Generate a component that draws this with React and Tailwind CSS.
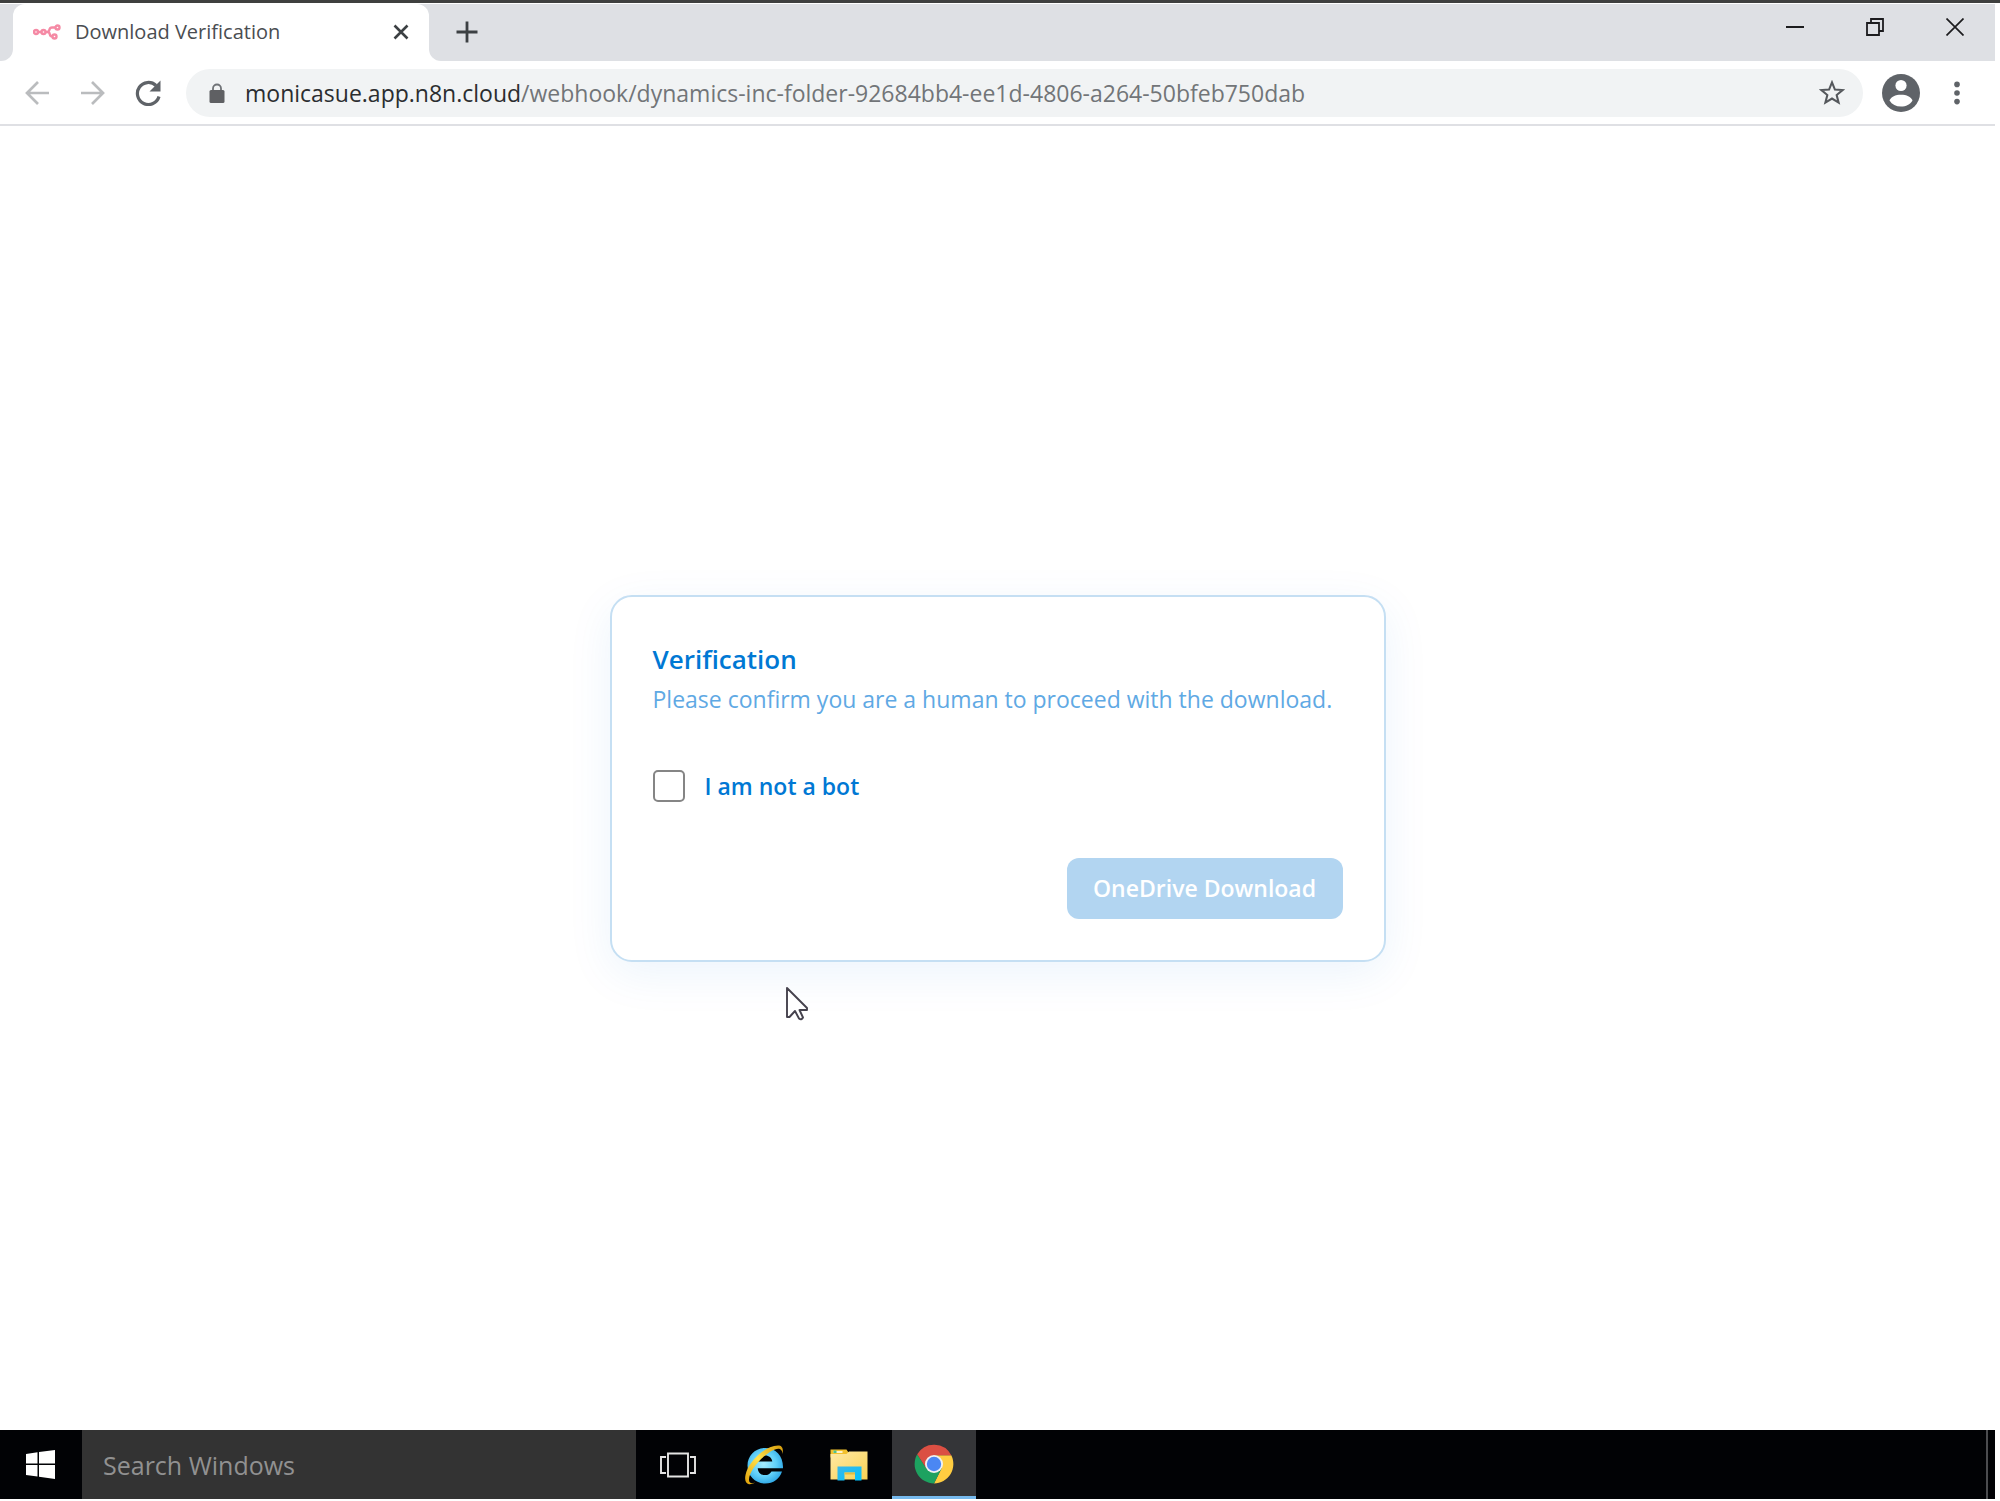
import React from "react";

function Favicon() {
  return (
    <svg viewBox="0 0 28 16" className="h-4 w-7 shrink-0" fill="none" stroke="#f58aa5" strokeWidth="2.400">
      <circle cx="3" cy="8" r="2" />
      <circle cx="10.500" cy="8" r="2" />
      <circle cx="24.500" cy="3.500" r="2" />
      <circle cx="21.500" cy="12.500" r="2" />
      <path d="M5 8h3.500M12.500 8H14c1.600 0 2-.8 2.400-2.300C16.800 4.200 17.600 3.500 19 3.500h3.500M14.500 8c1.600 0 2 .9 2.300 2.200.3 1.500 1 2.300 2.700 2.300" />
    </svg>
  );
}

function TabStrip() {
  return (
    <div className="flex h-[57px] bg-white">
      <div className="w-[13px] rounded-br-xl bg-[#dee0e4]" />
      <div className="w-[416px] bg-gradient-to-b from-[#dee0e4] from-50% to-white to-50%">
        <div className="flex h-full items-center rounded-t-xl bg-white pr-[20px] pb-[2px] pl-[20px]">
          <Favicon />
          <span className="ml-[14px] flex-1 text-[20px] leading-6 whitespace-nowrap text-[#4a4d51]">Download Verification</span>
          <button type="button" aria-label="Close tab">
            <svg viewBox="0 0 16 16" className="size-4" stroke="#3c4043" strokeWidth="2.600">
              <path d="M1.500 1.500l13 13M14.500 1.500l-13 13" />
            </svg>
          </button>
        </div>
      </div>
      <div className="flex flex-1 rounded-bl-xl bg-[#dee0e4]">
        <button type="button" aria-label="New tab" className="flex h-14 w-[76px] items-center justify-center">
          <svg viewBox="0 0 22 22" className="size-[22px]" stroke="#3c4043" strokeWidth="2.800">
            <path d="M11 .5v21M.5 11h21" />
          </svg>
        </button>
        <div className="ml-auto flex h-[46px]">
          <button type="button" aria-label="Minimize" className="flex w-20 items-center justify-center">
            <svg viewBox="0 0 18 18" className="size-[18px]" stroke="#1c1c1e" strokeWidth="2">
              <path d="M0 9h18" />
            </svg>
          </button>
          <button type="button" aria-label="Restore" className="flex w-20 items-center justify-center">
            <svg viewBox="0 0 18 18" className="size-[18px]" fill="none" stroke="#1c1c1e" strokeWidth="1.800">
              <path d="M1 5h12v12H1zM5 5V1h12v12h-4" />
            </svg>
          </button>
          <button type="button" aria-label="Close window" className="flex w-20 items-center justify-center">
            <svg viewBox="0 0 18 18" className="size-[18px]" stroke="#1c1c1e" strokeWidth="1.700">
              <path d="M.5 .5l17 17M17.500 .5l-17 17" />
            </svg>
          </button>
        </div>
      </div>
    </div>
  );
}

function Toolbar() {
  return (
    <div className="flex h-[65px] items-center border-b-2 border-[#dfe0e4] bg-white pr-[28px] pl-[22px]">
      <button type="button" aria-label="Back" className="flex w-[30px] justify-center">
        <svg viewBox="0 0 26 26" className="size-[26px]" fill="none" stroke="#babcbe" strokeWidth="2.700">
          <path d="M25 13H3M14 2L3 13l11 11" />
        </svg>
      </button>
      <button type="button" aria-label="Forward" className="ml-[26px] flex w-[30px] justify-center">
        <svg viewBox="0 0 26 26" className="size-[26px]" fill="none" stroke="#babcbe" strokeWidth="2.700">
          <path d="M1 13h22M12 2l11 11-11 11" />
        </svg>
      </button>
      <button type="button" aria-label="Reload" className="ml-[25px] flex w-[30px] justify-center">
        <svg viewBox="0 0 26 26" className="size-[26px]" fill="none" stroke="#5f6368" strokeWidth="3.200">
          <path d="M24 16.500A11 11 0 1 1 21 5.500" />
          <path d="M25.500 .5v11h-11z" fill="#5f6368" stroke="none" />
        </svg>
      </button>
      <div className="ml-[23px] flex h-12 flex-1 items-center rounded-full bg-[#f1f3f4] pr-[18px] pl-[23px]">
        <svg viewBox="0 0 16 20" className="h-5 w-4 shrink-0">
          <path d="M4 8V5.500a4 4 0 0 1 8 0V8" fill="none" stroke="#6f7276" strokeWidth="1.800" />
          <rect x=".5" y="7" width="15" height="13" rx="1.500" fill="#5f6063" />
        </svg>
        <span className="ml-[20px] flex-1 text-[23px] leading-8 whitespace-nowrap text-[#727578]">
          <span className="text-[#2b2d30]">monicasue.app.n8n.cloud</span>/webhook/dynamics-inc-folder-92684bb4-ee1d-4806-a264-50bfeb750dab
        </span>
        <button type="button" aria-label="Bookmark this page">
          <svg viewBox="0 0 24 24" className="size-[26px]" fill="none" stroke="#55585c" strokeWidth="1.900">
            <path d="M12 2.200l2.700 6.600 7.100.5-5.500 4.600 1.800 7L12 17.100l-6.100 3.800 1.800-7L2.200 9.300l7.100-.5z" />
          </svg>
        </button>
      </div>
      <button type="button" aria-label="Profile" className="ml-[18px]">
        <svg viewBox="0 0 40 40" className="size-10">
          <circle cx="20" cy="20" r="19" fill="#5f6368" />
          <circle cx="20" cy="12.500" r="5.600" fill="#fff" />
          <path d="M8.500 27.500C10 23.800 14.500 21.800 20 21.800s10 2 11.500 5.700C29 31.500 25 33.600 20 33.600S11 31.500 8.500 27.500z" fill="#fff" />
        </svg>
      </button>
      <button type="button" aria-label="Menu" className="ml-[26px] flex w-5 justify-center">
        <svg viewBox="0 0 6 24" className="h-6 w-[6px]" fill="#5f6368">
          <circle cx="3" cy="3.400" r="2.800" />
          <circle cx="3" cy="12" r="2.800" />
          <circle cx="3" cy="20.600" r="2.800" />
        </svg>
      </button>
    </div>
  );
}

function VerificationCard() {
  return (
    <section className="relative w-[776px] rounded-[22px] border-2 border-[#c5dff3] bg-white px-[41px] pt-[42px] pb-[41px] shadow-[0_12px_46px_rgba(0,120,212,0.08)]">
      <h1 className="text-[26px] leading-10 font-semibold text-[#0078d4]">Verification</h1>
      <p className="text-[23px] leading-10 whitespace-nowrap text-[#5fa9e4]">
        Please confirm you are a human to proceed with the download.
      </p>
      <div className="mt-[47px] flex items-center">
        <input
          id="not-bot"
          type="checkbox"
          className="size-8 appearance-none rounded-[5px] border-2 border-[#858585] bg-white checked:bg-[#0078d4]"
        />
        <label htmlFor="not-bot" className="ml-5 text-[23px] leading-10 font-semibold text-[#0078d4]">
          I am not a bot
        </label>
      </div>
      <div className="mt-[52px] flex justify-end">
        <button type="button" disabled className="h-[61px] w-[276px] rounded-xl bg-[#b2d5f1] text-[23px] leading-8 font-semibold whitespace-nowrap text-white">
          OneDrive Download
        </button>
      </div>
      <svg viewBox="0 0 24 36" className="absolute top-[389px] left-[173px] h-9 w-6" fill="#fff" stroke="#45424d" strokeWidth="1.900" strokeLinejoin="round">
        <path d="M2 2v29h2.500L10 25l4 7.500q2.500 2 4-1L14.500 24H22v-2z" />
      </svg>
    </section>
  );
}

function ExplorerIcon() {
  return (
    <svg viewBox="0 0 38 34" className="h-[34px] w-[38px]">
      <defs>
        <linearGradient id="folder" x1="0" y1="0" x2="1" y2="1">
          <stop offset="0" stopColor="#ffe9a6" />
          <stop offset="1" stopColor="#f8d253" />
        </linearGradient>
        <linearGradient id="stand" x1="0" y1="0" x2="1" y2="1">
          <stop offset="0" stopColor="#3cb7e6" />
          <stop offset="1" stopColor="#00c3ff" />
        </linearGradient>
      </defs>
      <path d="M.5 1.500h16l2 3H37v5H.5z" fill="#f2c12e" />
      <rect x="3.500" y="3" width="9" height="2" fill="#fff3c8" />
      <rect x="3.500" y="2.500" width="3" height="2.500" fill="#4fc28c" />
      <path d="M.5 6h16l2.500-2.500h18.500V31.500H.5z" fill="url(#folder)" />
      <path d="M7.500 32.500V18.500h24v14h-6.500v-8h-10.500v8z" fill="url(#stand)" />
      <path d="M14.500 24.500h10.500v2h-10.500z" fill="#e2bd43" />
    </svg>
  );
}

function InternetExplorerIcon() {
  return (
    <svg viewBox="0 0 40 40" className="size-10">
      <defs>
        <radialGradient id="ie" cx="0.450" cy="0.450" r="0.600">
          <stop offset="0" stopColor="#a5ecff" />
          <stop offset="0.600" stopColor="#5fcff8" />
          <stop offset="1" stopColor="#2ba3e3" />
        </radialGradient>
        <linearGradient id="ring" x1="1" y1="0" x2="0" y2="1">
          <stop offset="0" stopColor="#d69b0a" />
          <stop offset="0.500" stopColor="#ffe34d" />
          <stop offset="1" stopColor="#e0a008" />
        </linearGradient>
      </defs>
      <path
        fillRule="evenodd"
        d="M21 3C11 3 3.500 11 3.500 20.500 3.500 31 11.500 38.500 21 38.500c8.500 0 14.500-4.500 17-12H27.500c-1.500 2.500-3.500 3.600-6.500 3.600-4.300 0-7-2.800-7.300-6.900H39C39.500 11 32 3 21 3zM14 16.500c.8-3.700 3.500-6 7.300-6 3.700 0 6.500 2.300 7 6z"
        fill="url(#ie)"
      />
      <path
        d="M38.500 9C39.500 4 38.500 .5 34 .5 23 .5 9.500 12 3.500 24 0 31.500 .3 38.800 5 39.200c2 .2 4-.5 6-1.600-4 1.300-6 .4-6-3.200C5 28 12.500 17.500 20.500 11 27 5.500 38 -1 38.500 9z"
        fill="url(#ring)"
      />
    </svg>
  );
}

function ChromeIcon() {
  return (
    <svg viewBox="-20 -20 40 40" className="size-10">
      <path d="M0-8.700H17.300A19.400 19.400 0 0 1 0 19.400L7.500 4.400z" fill="#ffcd41" />
      <path d="M-16.800-9.700L-7.600 4.400L7.500 4.400L0 19.400A19.400 19.400 0 0 1-16.800-9.700z" fill="#1da260" />
      <path d="M-16.800-9.700A19.400 19.400 0 0 1 17.300-8.700H0L-7.600 4.400z" fill="#db4f43" />
      <circle r="9" fill="#f1f1f1" />
      <circle r="7.200" fill="#4b87f3" />
    </svg>
  );
}

function Taskbar() {
  return (
    <footer className="mb-[2px] flex h-[69px] bg-[#010205]">
      <button type="button" aria-label="Start" className="flex w-[82px] items-center justify-center pr-[2px]">
        <svg viewBox="0 0 29 29" className="size-[29px]" fill="#fff">
          <path d="M0 4l11.500-1.700V13.500H0zM13 2.100L29 0v13.500H13zM0 15h11.500v11.500L0 25zM13 15h16v14l-16-2.200z" />
        </svg>
      </button>
      <input
        type="text"
        aria-label="Search Windows"
        placeholder="Search Windows"
        className="w-[554px] bg-[#333333] pl-[21px] text-[25px] leading-8 outline-none placeholder:text-[#919191] placeholder:opacity-100"
      />
      <button type="button" aria-label="Task View" className="flex w-[84px] items-center justify-center">
        <svg viewBox="0 0 36 26" className="h-[26px] w-9" fill="none" stroke="#e4e4e4" strokeWidth="1.900">
          <path d="M8 1.500h20v23H8zM6 5H1v16h5M30 5h5v16h-5" />
        </svg>
      </button>
      <button type="button" aria-label="Internet Explorer" className="flex w-[88px] items-center justify-center">
        <InternetExplorerIcon />
      </button>
      <button type="button" aria-label="File Explorer" className="flex w-[84px] items-center justify-center pr-[2px]">
        <ExplorerIcon />
      </button>
      <button type="button" aria-label="Google Chrome" className="flex w-[84px] items-center justify-center border-b-[3px] border-[#76b9ed] bg-[#343538] pt-[2px]">
        <ChromeIcon />
      </button>
      <button type="button" aria-label="Show desktop" className="ml-auto w-[9px] border-l-2 border-[#4b4c4f]" />
    </footer>
  );
}

export default function App() {
  return (
    <div className="flex min-h-screen flex-col border-t-[3px] border-[#3f403f] bg-white font-['Open_Sans','Noto_Sans',sans-serif]">
      <div className="mt-px mr-[5px] flex flex-1 flex-col">
        <TabStrip />
        <Toolbar />
        <main className="flex flex-1 items-center justify-center">
          <VerificationCard />
        </main>
        <Taskbar />
      </div>
    </div>
  );
}
